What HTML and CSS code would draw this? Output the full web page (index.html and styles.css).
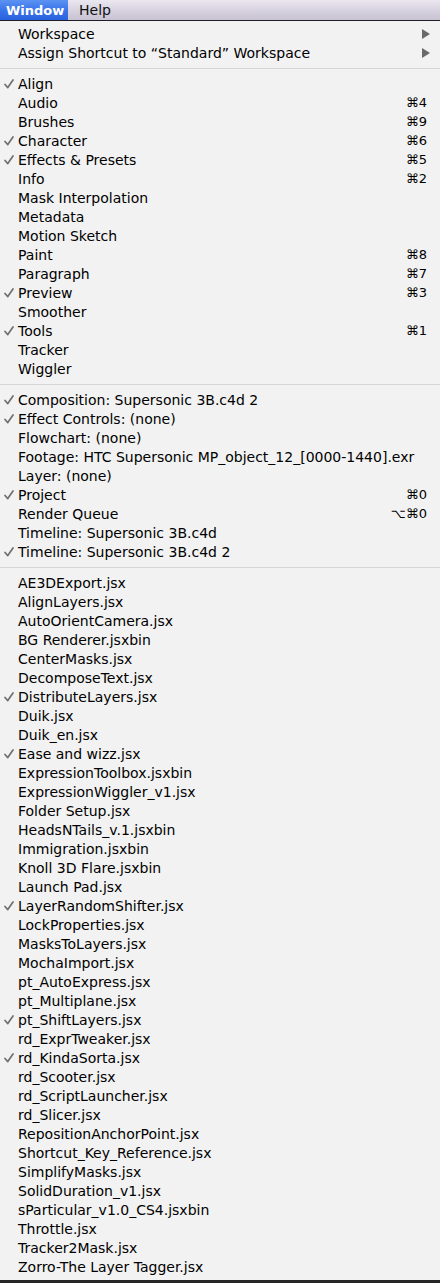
FILE: index.html
```html
<!DOCTYPE html>
<html>
<head>
<meta charset="utf-8">
<link rel="stylesheet" href="styles.css">
</head>
<body>
<div class="screen">
  <div class="menubar">
    <span class="mb-item active">Window</span>
    <span class="mb-item">Help</span>
  </div>
  <div class="menu">
    <ul class="group">
      <li class="item"><span class="label">Workspace</span><span class="arrow"></span></li>
      <li class="item"><span class="label">Assign Shortcut to “Standard” Workspace</span><span class="arrow"></span></li>
    </ul>
    <div class="sep"></div>
    <ul class="group">
      <li class="item checked"><span class="label">Align</span></li>
      <li class="item"><span class="label">Audio</span><span class="key">⌘4</span></li>
      <li class="item"><span class="label">Brushes</span><span class="key">⌘9</span></li>
      <li class="item checked"><span class="label">Character</span><span class="key">⌘6</span></li>
      <li class="item checked"><span class="label">Effects &amp; Presets</span><span class="key">⌘5</span></li>
      <li class="item"><span class="label">Info</span><span class="key">⌘2</span></li>
      <li class="item"><span class="label">Mask Interpolation</span></li>
      <li class="item"><span class="label">Metadata</span></li>
      <li class="item"><span class="label">Motion Sketch</span></li>
      <li class="item"><span class="label">Paint</span><span class="key">⌘8</span></li>
      <li class="item"><span class="label">Paragraph</span><span class="key">⌘7</span></li>
      <li class="item checked"><span class="label">Preview</span><span class="key">⌘3</span></li>
      <li class="item"><span class="label">Smoother</span></li>
      <li class="item checked"><span class="label">Tools</span><span class="key">⌘1</span></li>
      <li class="item"><span class="label">Tracker</span></li>
      <li class="item"><span class="label">Wiggler</span></li>
    </ul>
    <div class="sep"></div>
    <ul class="group">
      <li class="item checked"><span class="label">Composition: Supersonic 3B.c4d 2</span></li>
      <li class="item checked"><span class="label">Effect Controls: (none)</span></li>
      <li class="item"><span class="label">Flowchart: (none)</span></li>
      <li class="item"><span class="label">Footage: HTC Supersonic MP_object_12_[0000-1440].exr</span></li>
      <li class="item"><span class="label">Layer: (none)</span></li>
      <li class="item checked"><span class="label">Project</span><span class="key">⌘0</span></li>
      <li class="item"><span class="label">Render Queue</span><span class="key">⌥⌘0</span></li>
      <li class="item"><span class="label">Timeline: Supersonic 3B.c4d</span></li>
      <li class="item checked"><span class="label">Timeline: Supersonic 3B.c4d 2</span></li>
    </ul>
    <div class="sep"></div>
    <ul class="group">
      <li class="item"><span class="label">AE3DExport.jsx</span></li>
      <li class="item"><span class="label">AlignLayers.jsx</span></li>
      <li class="item"><span class="label">AutoOrientCamera.jsx</span></li>
      <li class="item"><span class="label">BG Renderer.jsxbin</span></li>
      <li class="item"><span class="label">CenterMasks.jsx</span></li>
      <li class="item"><span class="label">DecomposeText.jsx</span></li>
      <li class="item checked"><span class="label">DistributeLayers.jsx</span></li>
      <li class="item"><span class="label">Duik.jsx</span></li>
      <li class="item"><span class="label">Duik_en.jsx</span></li>
      <li class="item checked"><span class="label">Ease and wizz.jsx</span></li>
      <li class="item"><span class="label">ExpressionToolbox.jsxbin</span></li>
      <li class="item"><span class="label">ExpressionWiggler_v1.jsx</span></li>
      <li class="item"><span class="label">Folder Setup.jsx</span></li>
      <li class="item"><span class="label">HeadsNTails_v.1.jsxbin</span></li>
      <li class="item"><span class="label">Immigration.jsxbin</span></li>
      <li class="item"><span class="label">Knoll 3D Flare.jsxbin</span></li>
      <li class="item"><span class="label">Launch Pad.jsx</span></li>
      <li class="item checked"><span class="label">LayerRandomShifter.jsx</span></li>
      <li class="item"><span class="label">LockProperties.jsx</span></li>
      <li class="item"><span class="label">MasksToLayers.jsx</span></li>
      <li class="item"><span class="label">MochaImport.jsx</span></li>
      <li class="item"><span class="label">pt_AutoExpress.jsx</span></li>
      <li class="item"><span class="label">pt_Multiplane.jsx</span></li>
      <li class="item checked"><span class="label">pt_ShiftLayers.jsx</span></li>
      <li class="item"><span class="label">rd_ExprTweaker.jsx</span></li>
      <li class="item checked"><span class="label">rd_KindaSorta.jsx</span></li>
      <li class="item"><span class="label">rd_Scooter.jsx</span></li>
      <li class="item"><span class="label">rd_ScriptLauncher.jsx</span></li>
      <li class="item"><span class="label">rd_Slicer.jsx</span></li>
      <li class="item"><span class="label">RepositionAnchorPoint.jsx</span></li>
      <li class="item"><span class="label">Shortcut_Key_Reference.jsx</span></li>
      <li class="item"><span class="label">SimplifyMasks.jsx</span></li>
      <li class="item"><span class="label">SolidDuration_v1.jsx</span></li>
      <li class="item"><span class="label">sParticular_v1.0_CS4.jsxbin</span></li>
      <li class="item"><span class="label">Throttle.jsx</span></li>
      <li class="item"><span class="label">Tracker2Mask.jsx</span></li>
      <li class="item"><span class="label">Zorro-The Layer Tagger.jsx</span></li>
    </ul>
  </div>
  <div class="below"></div>
</div>
</body>
</html>
```
FILE: styles.css
```css
html, body {
  margin: 0;
  padding: 0;
  background: #262626;
}
.screen {
  width: 440px;
  height: 1283px;
  overflow: hidden;
  font-family: "DejaVu Sans", "Lucida Grande", sans-serif;
  font-size: 14px;
  color: #000;
  display: flex;
  flex-direction: column;
}
.menubar {
  height: 20px;
  flex: none;
  display: flex;
  align-items: stretch;
  background: linear-gradient(to bottom, #ebe8f0 0%, #d8d3e0 50%, #c8c2d2 100%);
  border-bottom: 1px solid #1e1e28;
}
.mb-item {
  display: flex;
  align-items: center;
  padding: 0 10px 0 6px;
  font-weight: bold;
  font-size: 13px;
  color: #111;
}
.mb-item.active {
  width: 52px;
  padding: 0 10px 0 6px;
  color: #fff;
  background: linear-gradient(to bottom, #5c93f2 0%, #3a74ea 50%, #2a62de 100%);
}
.mb-item + .mb-item {
  padding-left: 11px;
  font-weight: normal;
  font-size: 14px;
}
.menu {
  background: #f2f2f2;
  padding: 3px 0 4px;
  flex: none;
}
.group {
  list-style: none;
  margin: 0;
  padding: 0;
}
.item {
  position: relative;
  height: 19px;
  display: flex;
  align-items: center;
  padding: 0 13px 0 18px;
}
.label {
  flex: 1;
  white-space: nowrap;
}
.key {
  white-space: nowrap;
  font-size: 13px;
}
.item.checked::before {
  content: "";
  position: absolute;
  left: 4px;
  top: 5px;
  width: 10px;
  height: 10px;
  background: no-repeat center/10px 10px url("data:image/svg+xml;utf8,<svg xmlns='http://www.w3.org/2000/svg' viewBox='0 0 10 10'><path d='M1 5.5 L3.8 8.6 L9 1' fill='none' stroke='%23707070' stroke-width='1.7' stroke-linecap='round' stroke-linejoin='round'/></svg>");
}
.arrow {
  width: 0;
  height: 0;
  border-top: 5px solid transparent;
  border-bottom: 5px solid transparent;
  border-left: 8px solid #6a6a6a;
  margin-right: -3px;
}
.sep {
  height: 12px;
  display: flex;
  align-items: center;
}
.sep::before {
  content: "";
  display: block;
  width: 100%;
  height: 1px;
  background: #d6d6d6;
}
.below {
  flex: 1;
  background: #262626;
}
```
